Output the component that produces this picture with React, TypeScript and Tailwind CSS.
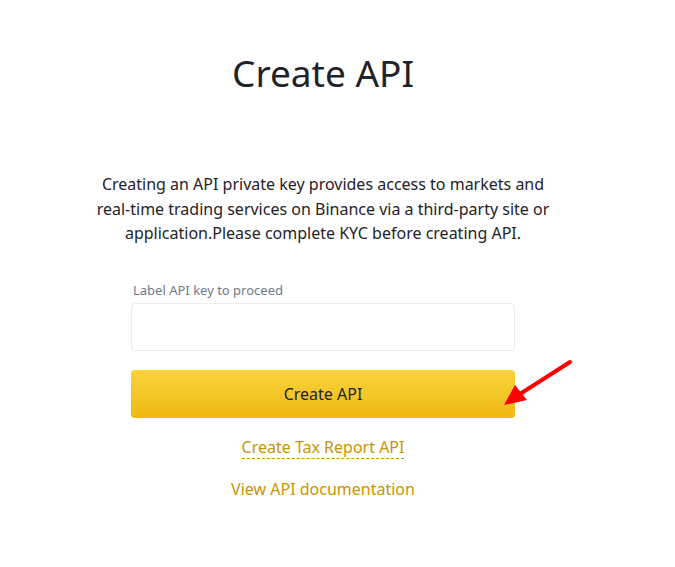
import React from 'react';

const App: React.FC = () => {
  return (
    <div className="relative min-h-[567px] w-[675px] bg-white" style={{ fontFamily: '"Noto Sans", "Open Sans", sans-serif' }}>
      <div className="flex w-[646px] flex-col items-center pt-[50px]">
        <h1 className="text-[37px] leading-[46px] font-normal text-[#1e2329]">Create API</h1>

        <p className="mt-[76px] w-[470px] text-center text-[16px] leading-[24.5px] text-[#1e2329]">
          Creating an API private key provides access to markets and real-time trading services on Binance via a third-party site or application.Please complete KYC before creating API.
        </p>

        {/* Form */}
        <div className="mt-[35px] flex w-[384px] flex-col">
          <label className="pl-[2px] text-[13px] leading-[18px] text-[#707a8a]">Label API key to proceed</label>
          <input className="mt-[4px] h-[48px] rounded-[4px] border border-[#eaecef] px-3 outline-none" />
          <button className="mt-[19px] h-[48px] rounded-[4px] bg-gradient-to-b from-[#f8d33a] to-[#f0b90b] text-[16px] text-[#1e2329]">
            Create API
          </button>
        </div>

        <a className="mt-[18px] border-b border-dashed border-[#c99400] text-[16px] leading-[22px] text-[#c99400]">Create Tax Report API</a>
        <a className="mt-[19px] text-[16px] leading-[22px] text-[#c99400]">View API documentation</a>
      </div>

      {/* annotation arrow */}
      <svg className="absolute left-[495px] top-[355px]" width="85" height="60" viewBox="0 0 85 60">
        <line x1="75" y1="7" x2="25" y2="39" stroke="#ff0000" strokeWidth="4" strokeLinecap="round" />
        <polygon points="9,50 20,30 32,45" fill="#ff0000" />
      </svg>
    </div>
  );
};

export default App;
